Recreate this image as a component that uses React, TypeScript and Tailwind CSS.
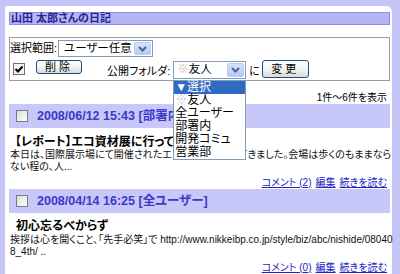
import React from 'react'

const XpButton = ({ label, className }: { label: string; className: string }) => (
    <div className={`flex items-center justify-center rounded-[3px] border border-[#1d4f84] bg-gradient-to-b from-white via-[#f4f4f0] to-[#dcdad2] text-[11px] tracking-[3px] text-black ${className}`}>
        {label}
    </div>
)

const XpArrow = () => (
    <div className="flex h-full w-[17px] items-center justify-center rounded-[2px] border border-[#b9cdf7] bg-gradient-to-b from-[#d5e2fc] to-[#b5c9f6]">
        <svg width="9" height="6" viewBox="0 0 9 6">
            <path d="M1 1 L4.5 4.5 L8 1" fill="none" stroke="#4d6185" strokeWidth="2" />
        </svg>
    </div>
)

const CheckBox = () => (
    <div className="h-[12px] w-[12px] border border-[#7b7b7b] bg-gradient-to-br from-[#dcdcd8] to-white" />
)

const Links = ({ count }: { count: number }) => (
    <div className="flex h-[12px] items-center justify-end gap-[4px] pr-[3px] text-[10px] leading-[12px] text-[#2323c4]">
        <span className="underline">コメント ({count})</span>
        <span className="underline">編集</span>
        <span className="underline">続きを読む</span>
    </div>
)

const EntryHead = ({ date }: { date: string }) => (
    <div className="flex h-[24px] items-center bg-[#c7c7f9] pl-[7px]">
        <CheckBox />
        <span className="ml-[9px] text-[12.5px] font-bold text-[#3a3ac4]">{date}</span>
    </div>
)

export default function App() {
    const folders = ['※友人', '全ユーザー', '部署内', '開発コミュ', '営業部']

    return (
        <div className="h-[274px] w-[400px] overflow-hidden bg-[#c4c4f6] pl-[5px] pr-[8px] pt-[6px] text-black [font-family:'Liberation_Sans','Noto_Sans_CJK_JP',sans-serif] [font-feature-settings:'palt']">
            <div className="h-[300px] rounded-tl-[2px] rounded-tr-[6px] bg-white pl-[4px] pr-[2px] pt-[6px]">
                <div className="flex h-[13px] items-center border border-[#8d8df1] bg-[#b5b5f4] pl-[1px] text-[11px] font-bold text-[#25258c]">
                    山田 太郎さんの日記
                </div>

                <div className="mt-[12px] h-[44px] border border-[#9c9c9c]">
                    <div className="mt-[2px] flex h-[17px] items-center">
                        <span className="w-[48px] text-[11px]">選択範囲:</span>
                        <div className="flex h-[17px] w-[95px] items-center justify-between border border-[#7f9db9] bg-white pl-[5px] pr-[1px] py-[1px]">
                            <span className="text-[11.5px]">ユーザー任意</span>
                            <XpArrow />
                        </div>
                    </div>

                    <div className="mt-[3px] flex items-start">
                        <div className="ml-[3px] mt-[3px]">
                            <svg width="12" height="12" viewBox="0 0 12 12">
                                <rect x="0.5" y="0.5" width="11" height="11" fill="#f2f2f2" stroke="#6e6e6e" />
                                <path d="M2.5 6 L5 8.5 L9.5 3.5" fill="none" stroke="#000" strokeWidth="2" />
                            </svg>
                        </div>
                        <XpButton label="削除" className="ml-[11px] h-[14px] w-[46px]" />
                        <span className="ml-[25px] mt-[3px] text-[11px]">公開フォルダ:</span>
                        <div className="relative ml-[3px] mt-[1px]">
                            <div className="flex h-[18px] w-[73px] items-center justify-between border border-[#7f9db9] bg-white pl-[3px] pr-[1px] py-[1px]">
                                <span className="text-[11.5px]">
                                    <span className="text-[#c8c8c8]">※</span>友人
                                </span>
                                <XpArrow />
                            </div>
                            <div className="absolute left-0 top-[19px] z-10 w-[73px] border border-[#7f9db9] bg-white text-[12px] leading-[13px]">
                                <div className="h-[13px] bg-[#316ac5] pl-[1px] text-white">▼選択</div>
                                {folders.map((f) => (
                                    <div key={f} className="h-[13px] pl-[1px]">
                                        {f.startsWith('※') ? (
                                            <>
                                                <span className="text-[#c8c8c8]">※</span>
                                                {f.slice(1)}
                                            </>
                                        ) : (
                                            f
                                        )}
                                    </div>
                                ))}
                            </div>
                        </div>
                        <span className="ml-[3px] mt-[3px] text-[11px]">に</span>
                        <XpButton label="変更" className="ml-[2px] h-[18px] w-[47px]" />
                    </div>
                </div>

                <div className="mt-[11px] h-[12px] pr-[3px] text-right text-[10px] leading-[12px]">1件～6件を表示</div>

                <EntryHead date="2008/06/12 15:43 [部署内]" />
                <div className="mt-[7px] h-[14px] pl-[6px] text-[12px] font-bold leading-[14px]">【レポート】エコ資材展に行ってきました</div>
                <div className="pl-[1px] text-[10px] leading-[12px] text-[#111]">
                    <div className="whitespace-nowrap">本日は、国際展示場にて開催されたエコ資材展に行ってきました。会場は歩くのもままなら</div>
                    <div className="whitespace-nowrap">ない程の、人...</div>
                </div>
                <div className="mt-[4px]">
                    <Links count={2} />
                </div>

                <EntryHead date="2008/04/14 16:25 [全ユーザー]" />
                <div className="mt-[6px] h-[14px] pl-[7px] text-[12px] font-bold leading-[14px]">初心忘るべからず</div>
                <div className="mt-[1px] pl-[1px] text-[10px] leading-[12px] text-[#111]">
                    <div className="whitespace-nowrap">挨拶は心を開くこと、「先手必笑」で http://www.nikkeibp.co.jp/style/biz/abc/nishide/08040</div>
                    <div className="whitespace-nowrap">8_4th/ ..</div>
                </div>
                <div className="mt-[4px]">
                    <Links count={0} />
                </div>
            </div>
        </div>
    )
}
